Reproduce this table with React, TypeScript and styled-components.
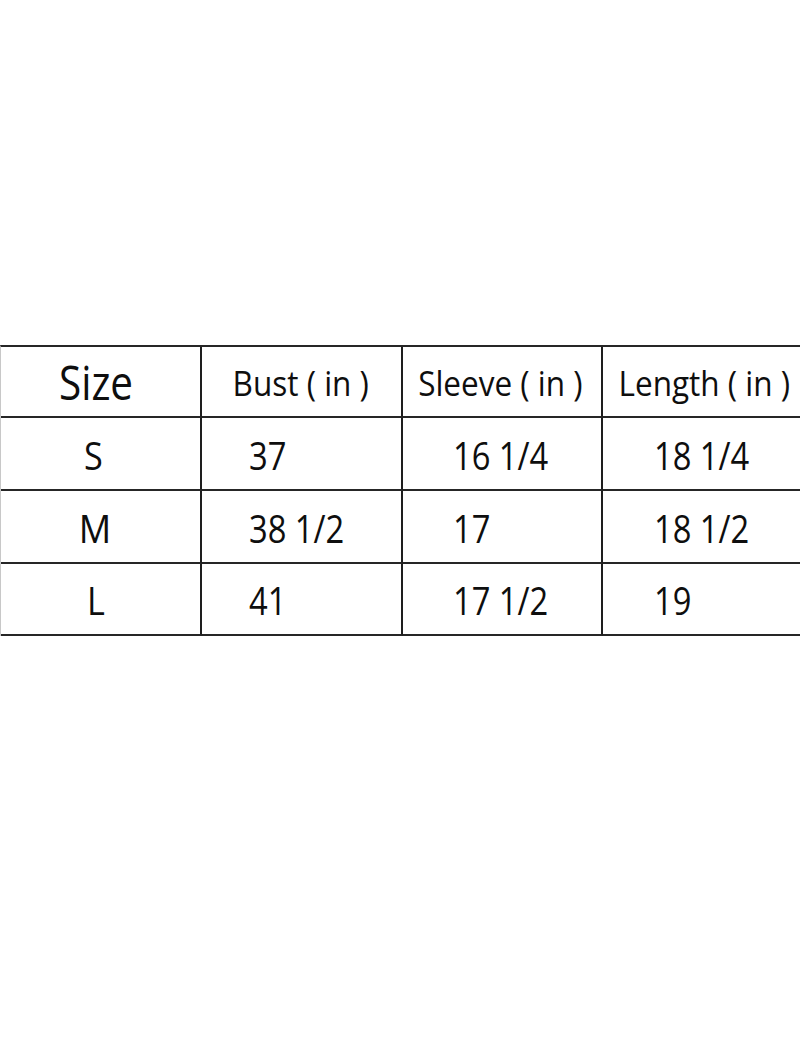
import React from 'react';
import styled, { createGlobalStyle } from 'styled-components';

const GlobalStyle = createGlobalStyle`
  html, body {
    margin: 0;
    padding: 0;
    background: #ffffff;
    overflow: hidden;
  }
  body {
    font-family: "Open Sans", "Noto Sans", sans-serif;
    color: #0e0e0e;
  }
`;

const Page = styled.div`
  width: 800px;
  height: 1050px;
  padding-top: 345px;
  box-sizing: border-box;
  overflow: hidden;
`;

const Grid = styled.div`
  display: grid;
  grid-template-columns: 201px 201px 200px 205px;
  width: 808px;
  border-top: 2px solid #262626;
  border-left: 1px solid #c8c8c8;
`;

const Cell = styled.div<{ $h: number; $align: 'center' | 'left'; $pad?: number }>`
  height: ${(p) => p.$h}px;
  box-sizing: border-box;
  border-right: 2px solid #1e1e1e;
  border-bottom: 2px solid #262626;
  display: flex;
  align-items: center;
  justify-content: ${(p) => (p.$align === 'center' ? 'center' : 'flex-start')};
  padding-left: ${(p) => p.$pad ?? 0}px;
  padding-top: 2px;
  overflow: hidden;
`;

const Text = styled.span<{ $size: number; $scale?: number; $left?: boolean; $nudge?: number }>`
  display: inline-block;
  font-size: ${(p) => p.$size}px;
  font-weight: 500;
  line-height: 1;
  white-space: nowrap;
  margin-left: ${(p) => p.$nudge ?? 0}px;
  transform: scaleX(${(p) => p.$scale ?? 0.86});
  transform-origin: ${(p) => (p.$left ? 'left' : 'center')} center;
`;

const headers = [
  { label: 'Bust ( in )', nudge: -2 },
  { label: 'Sleeve ( in )', nudge: -3 },
  { label: 'Length ( in )', nudge: 0 },
];

const rows = [
  { size: 'S', nudge: -14, values: ['37', '16 1/4', '18 1/4'], h: 73 },
  { size: 'M', nudge: -10, values: ['38 1/2', '17', '18 1/2'], h: 73 },
  { size: 'L', nudge: -10, values: ['41', '17 1/2', '19'], h: 72 },
];

const pads = [47, 50, 51];

export default function App() {
  return (
    <Page>
      <GlobalStyle />
      <Grid>
        <Cell $h={71} $align="center">
          <Text $size={47} $nudge={-8}>Size</Text>
        </Cell>
        {headers.map((h) => (
          <Cell key={h.label} $h={71} $align="center">
            <Text $size={35} $scale={0.9} $nudge={h.nudge}>{h.label}</Text>
          </Cell>
        ))}
        {rows.map((r) => (
          <React.Fragment key={r.size}>
            <Cell $h={r.h} $align="center">
              <Text $size={38} $scale={r.size === 'M' ? 0.95 : 0.9} $nudge={r.nudge}>{r.size}</Text>
            </Cell>
            {r.values.map((v, i) => (
              <Cell key={i} $h={r.h} $align="left" $pad={pads[i]}>
                <Text $size={38} $left>{v}</Text>
              </Cell>
            ))}
          </React.Fragment>
        ))}
      </Grid>
    </Page>
  );
}
